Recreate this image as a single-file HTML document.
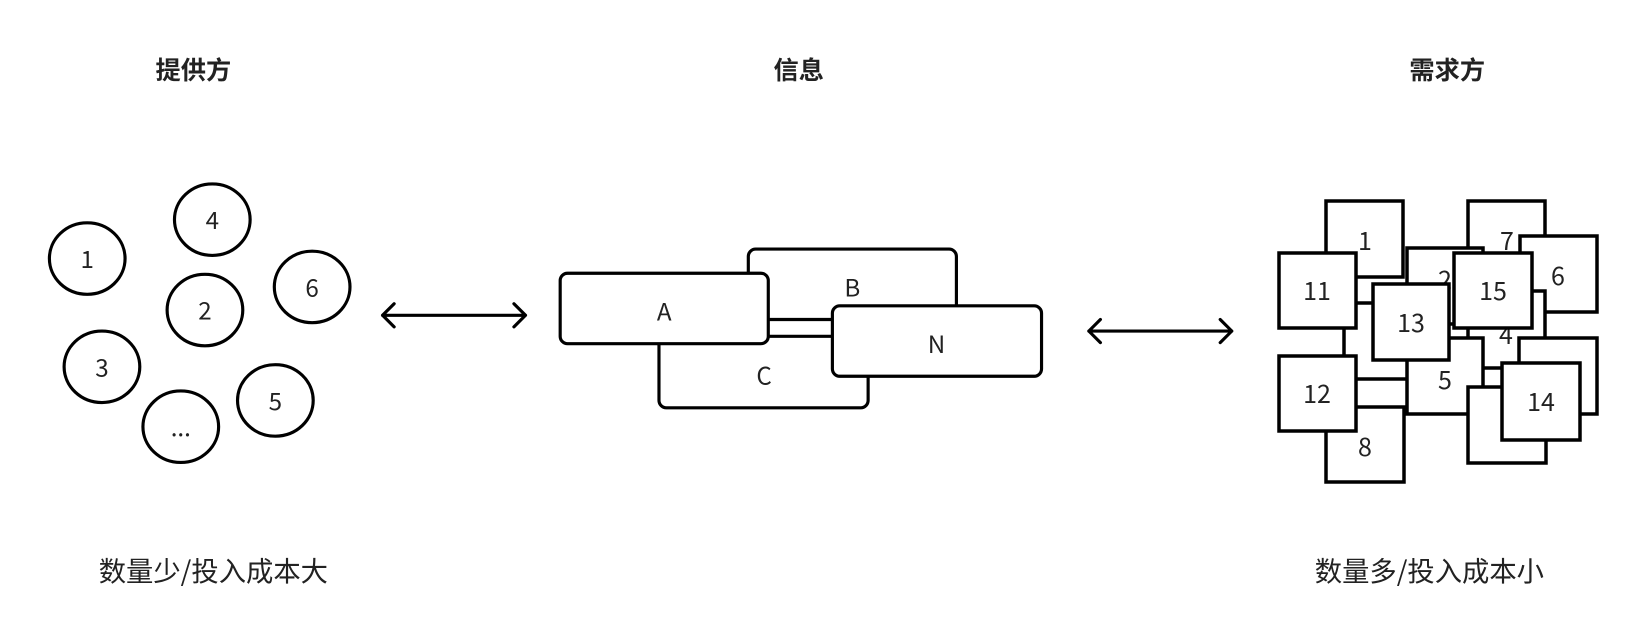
<!DOCTYPE html>
<html><head><meta charset="utf-8"><style>
html,body{margin:0;padding:0;background:#fff;width:1648px;height:638px;overflow:hidden}
text{font-family:"Noto Sans CJK SC","Liberation Sans",sans-serif;fill:#222}
</style></head><body>
<svg width="1648" height="638" viewBox="0 0 1648 638" xmlns="http://www.w3.org/2000/svg">
<g transform="scale(1.051)">
 <g font-weight="bold" font-size="24" text-anchor="middle">
  <text x="184" y="75">提供方</text>
  <text x="760" y="75">信息</text>
  <text x="1377" y="75">需求方</text>
 </g>
 <g fill="#fff" stroke="#000" stroke-width="3">
  <ellipse cx="83" cy="246" rx="36" ry="34"/>
  <ellipse cx="202" cy="209" rx="36" ry="34"/>
  <ellipse cx="195" cy="295" rx="36" ry="34"/>
  <ellipse cx="297" cy="273" rx="36" ry="34"/>
  <ellipse cx="97" cy="349" rx="36" ry="34"/>
  <ellipse cx="262" cy="381" rx="36" ry="34"/>
  <ellipse cx="172" cy="406" rx="36" ry="34"/>
 </g>
 <g font-size="23" text-anchor="middle">
  <text x="83" y="255">1</text>
  <text x="202" y="218">4</text>
  <text x="195" y="304">2</text>
  <text x="297" y="282">6</text>
  <text x="97" y="358">3</text>
  <text x="262" y="390">5</text>
  <text x="172" y="415">...</text>
 </g>
 <g fill="none" stroke="#000" stroke-width="3" stroke-linecap="round" stroke-linejoin="round">
  <path d="M364 300H500M375 289L364 300L375 311M489 289L500 300L489 311"/>
  <path d="M1036 315H1172M1047 304L1036 315L1047 326M1161 304L1172 315L1161 326"/>
 </g>
 <g fill="#fff" stroke="#000" stroke-width="3">
  <rect x="712" y="237" width="198" height="67" rx="7"/>
  <rect x="627" y="320" width="199" height="68" rx="7"/>
  <rect x="533" y="260" width="198" height="67" rx="7"/>
  <rect x="792" y="291" width="199" height="67" rx="7"/>
 </g>
 <g font-size="23" text-anchor="middle">
  <text x="811" y="282">B</text>
  <text x="727" y="366">C</text>
  <text x="632" y="305">A</text>
  <text x="891" y="336">N</text>
 </g>
 <g font-size="26" text-anchor="middle">
  <text x="203" y="553">数量少/投入成本大</text>
  <text x="1360" y="553">数量多/投入成本小</text>
 </g>
</g>
<g font-size="25" text-anchor="middle">
<g fill="#fff" stroke="#000" stroke-width="3.5">
 <rect x="1326" y="201" width="77" height="76"/>
 <rect x="1468" y="201" width="77" height="76"/>
</g>
<text x="1365" y="250">1</text>
<text x="1507" y="250">7</text>
<rect x="1520" y="236" width="77" height="76" fill="#fff" stroke="#000" stroke-width="3.5"/>
<text x="1558" y="285">6</text>
<rect x="1407" y="248" width="76" height="76" fill="#fff" stroke="#000" stroke-width="3.5"/>
<text x="1445" y="289">2</text>
<rect x="1468" y="291" width="77" height="77" fill="#fff" stroke="#000" stroke-width="3.5"/>
<text x="1506" y="344">4</text>
<rect x="1344" y="303" width="77" height="76" fill="#fff" stroke="#000" stroke-width="3.5"/>
<rect x="1407" y="338" width="76" height="76" fill="#fff" stroke="#000" stroke-width="3.5"/>
<text x="1445" y="389">5</text>
<rect x="1519" y="338" width="78" height="76" fill="#fff" stroke="#000" stroke-width="3.5"/>
<rect x="1468" y="387" width="78" height="76" fill="#fff" stroke="#000" stroke-width="3.5"/>
<text x="1507" y="434">9</text>
<rect x="1326" y="407" width="78" height="75" fill="#fff" stroke="#000" stroke-width="3.5"/>
<text x="1365" y="456">8</text>
<rect x="1279" y="253" width="77" height="75" fill="#fff" stroke="#000" stroke-width="3.5"/>
<text x="1317" y="300">11</text>
<rect x="1279" y="356" width="77" height="75" fill="#fff" stroke="#000" stroke-width="3.5"/>
<text x="1317" y="403">12</text>
<rect x="1373" y="284" width="76" height="76" fill="#fff" stroke="#000" stroke-width="3.5"/>
<text x="1411" y="332">13</text>
<rect x="1454" y="253" width="78" height="75" fill="#fff" stroke="#000" stroke-width="3.5"/>
<text x="1493" y="300">15</text>
<rect x="1502" y="363" width="78" height="77" fill="#fff" stroke="#000" stroke-width="3.5"/>
<text x="1541" y="411">14</text>
</g>
</svg>
</body></html>
